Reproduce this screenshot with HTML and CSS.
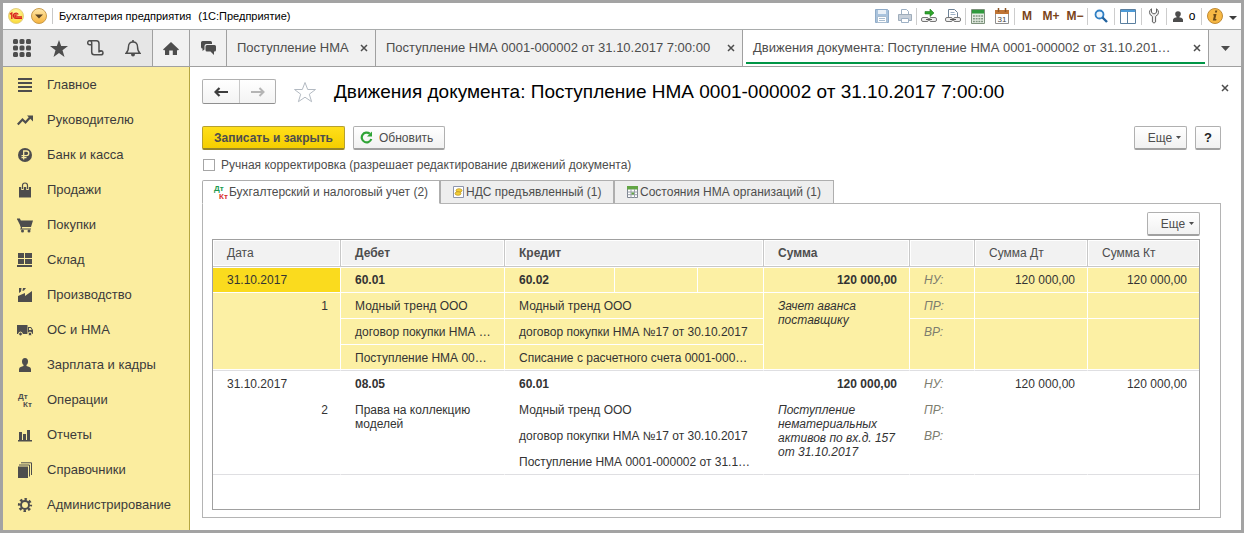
FILE: index.html
```html
<!DOCTYPE html>
<html lang="ru">
<head>
<meta charset="utf-8">
<title>Бухгалтерия предприятия</title>
<link rel="stylesheet" href="styles.css">
</head>
<body>
<div class="window">
  <header class="titlebar">
    <button class="round-btn" aria-label="1С">
      <svg width="18" height="18" viewBox="0 0 18 18"><defs><radialGradient id="gy" cx=".5" cy=".3" r=".7"><stop offset="0" stop-color="#fffbb0"/><stop offset="1" stop-color="#fbd92f"/></radialGradient></defs><circle cx="9" cy="9" r="7.500" fill="url(#gy)" stroke="#e3cf86"/><path d="M2.800 7.200 4.800 6V12M11.300 7.500A2.600 2.600 0 1 0 9.200 11.400H15M10 8.600A1 1 0 1 0 9.300 9.900H15" fill="none" stroke="#d8201c" stroke-width="1.300"/></svg>
    </button>
    <button class="round-btn round-btn-menu" aria-label="Главное меню">
      <svg width="18" height="18" viewBox="0 0 18 18"><defs><linearGradient id="go" x2="0" y2="1"><stop offset="0" stop-color="#ffe9ad"/><stop offset="1" stop-color="#f6b33c"/></linearGradient></defs><circle cx="9" cy="9" r="7.500" fill="url(#go)" stroke="#c89b4c"/><path d="M5 7.500h8L9 11.500z" fill="#5b4526"/></svg>
    </button>
    <span class="title-sep"></span>
    <span class="app-name">Бухгалтерия предприятия</span>
    <span class="app-kind">(1С:Предприятие)</span>
    <div class="tools">
      <button class="tool tool-s" aria-label="Сохранить"><svg width="16" height="16" viewBox="0 0 16 16"><path d="M1.500 1.500h12l1 1v12h-13z" fill="#a9c3dd" stroke="#8fabc8"/><path d="M4 2h8v4H4z" fill="#e9f0f7"/><path d="M3.500 8.500h9v6h-9z" fill="#fff" stroke="#a9bdd0"/><path d="M5 10.500h6M5 12.500h6" stroke="#a9bdd0"/></svg></button>
      <button class="tool tool-s" aria-label="Печать"><svg width="16" height="16" viewBox="0 0 16 16"><path d="M4.500 7V1.500h5l2 2V7" fill="#fff" stroke="#9db0c4"/><path d="M1.500 6.500h13v6h-13z" fill="#c7d0da" stroke="#9fadbb"/><path d="M4.500 10.500h7v4h-7z" fill="#fff" stroke="#9db0c4"/></svg></button>
      <span class="sep"></span>
      <button class="tool" aria-label="Получить ссылку"><svg width="18" height="16" viewBox="0 0 18 16"><path d="M5 3.500h5V1l4 4-4 3.500V6H5z" fill="#2fa52b" stroke="#1c7c20" stroke-width=".6"/><rect x="1.500" y="9.500" width="7" height="4" rx="1.500" fill="#eee" stroke="#777"/><rect x="9.500" y="9.500" width="7" height="4" rx="1.500" fill="#eee" stroke="#777"/><path d="M6 11.500h6" stroke="#555"/></svg></button>
      <button class="tool" aria-label="Перейти по ссылке"><svg width="18" height="16" viewBox="0 0 18 16"><path d="M4.500 9V1.500h6l3 3V9" fill="#fff" stroke="#6f8397"/><path d="M6.500 4.500h4M6.500 6.500h5" stroke="#9db0c4"/><rect x="1.500" y="9.500" width="7" height="4" rx="1.500" fill="#eee" stroke="#777"/><rect x="9.500" y="9.500" width="7" height="4" rx="1.500" fill="#eee" stroke="#777"/><path d="M6 11.500h6" stroke="#555"/></svg></button>
      <span class="sep"></span>
      <button class="tool" aria-label="Калькулятор"><svg width="14" height="15" viewBox="0 0 14 15"><path d="M.5.5h13v14H.5z" fill="#e4ece2" stroke="#7d927c"/><path d="M1 1h12v3.500H1z" fill="#2f9a3c"/><path d="M2 7h10M2 9.700h10M2 12.400h10" stroke="#7f9680" stroke-width="1.500" stroke-dasharray="1.900 .8"/></svg></button>
      <button class="tool" aria-label="Календарь"><svg width="14" height="16" viewBox="0 0 14 16"><path d="M.5 3h13v12.500H.5z" fill="#fff" stroke="#8f8f8f"/><path d="M0 2h14v4H0z" fill="#bf7434"/><path d="M3.500 0v4M10.500 0v4" stroke="#8c5526" stroke-width="1.500"/><text x="7" y="14" class="cal-day">31</text></svg></button>
      <span class="sep"></span>
      <button class="tool tool-m">M</button>
      <button class="tool tool-m">M+</button>
      <button class="tool tool-m">M−</button>
      <span class="sep"></span>
      <button class="tool tool-w" aria-label="Поиск"><svg width="14" height="14" viewBox="0 0 14 14"><circle cx="5.500" cy="5.500" r="4" fill="#eaf4fc" stroke="#2f7fc4" stroke-width="1.800"/><path d="M8.500 8.500 13 13" stroke="#22629e" stroke-width="2.400"/></svg></button>
      <span class="sep"></span>
      <button class="tool tool-w" aria-label="Панели"><svg width="16" height="15" viewBox="0 0 16 15"><path d="M.5.500h15v14H.500z" fill="#fff" stroke="#5a7f9f"/><path d="M1 1h14v2H1z" fill="#4d9bd8"/><path d="M7.500 3v11" stroke="#5a7f9f"/></svg></button>
      <span class="sep"></span>
      <button class="tool" aria-label="Настройка"><svg width="12" height="16" viewBox="0 0 12 16"><path d="M3.500.800A4 4 0 0 0 4 8l.4.500V14q1.600 2.200 3.200 0V8.500L8 8A4 4 0 0 0 8.500.800V4.500L6 6 3.500 4.500z" fill="#eee" stroke="#5f5f5f"/></svg></button>
      <span class="sep"></span>
      <button class="tool tool-user"><svg width="10" height="11" viewBox="0 0 10 11"><circle cx="5" cy="3" r="2.800" fill="#4d4d4d"/><path d="M0 11V9q0-2 3-2.500h4Q10 7 10 9v2zM3.500 4h3v4h-3z" fill="#4d4d4d"/></svg>о</button>
      <span class="sep"></span>
      <button class="tool tool-w" aria-label="Информация"><svg width="18" height="18" viewBox="0 0 18 18"><circle cx="9" cy="9" r="7.500" fill="#f7b844" stroke="#c08a35"/><path d="M9.300 3.500h2l-.4 2h-2zM7.500 7h3l-1.200 5h1.200l-.3 1.500H6.800l1.200-5H7.200z" fill="#6c4a17"/></svg></button>
      <button class="tool tool-arrow" aria-label="Ещё"><svg width="8" height="4" viewBox="0 0 8 4"><path d="M0 0h8L4 4z" fill="#3d3d3d"/></svg></button>
    </div>
  </header>

  <div class="tabbar">
    <div class="quick">
      <button class="quick-btn" aria-label="Меню функций"><svg width="18" height="18" viewBox="0 0 18 18" fill="#4d4d4d"><rect width="5" height="5" rx="1.500"/><rect x="6.500" width="5" height="5" rx="1.500"/><rect x="13" width="5" height="5" rx="1.500"/><rect y="6.500" width="5" height="5" rx="1.500"/><rect x="6.500" y="6.500" width="5" height="5" rx="1.500"/><rect x="13" y="6.500" width="5" height="5" rx="1.500"/><rect y="13" width="5" height="5" rx="1.500"/><rect x="6.500" y="13" width="5" height="5" rx="1.500"/><rect x="13" y="13" width="5" height="5" rx="1.500"/></svg></button>
      <button class="quick-btn" aria-label="Избранное"><svg width="18" height="17" viewBox="0 0 18 17"><path d="M9 0l2.200 6H18l-5.500 4.200L14.500 17 9 12.900 3.500 17l2-6.800L0 6h6.800z" fill="#4d4d4d"/></svg></button>
      <button class="quick-btn" aria-label="История"><svg width="17" height="16" viewBox="0 0 17 16" fill="none" stroke="#4d4d4d" stroke-width="1.500"><path d="M4.500 4.700H2.700A2 2 0 1 1 4.700 2.700V12q0 2.800 2.500 2.800H14A2 2 0 1 0 12 12.500V3.700Q12 .8 9.500.8H2.700M12 11.200h2.500"/></svg></button>
      <button class="quick-btn" aria-label="Оповещения"><svg width="16" height="17" viewBox="0 0 16 17"><path d="M1 13.300Q3.500 11 3.500 6.500 3.500 2 8 2t4.500 4.500Q12.500 11 15 13.300z" fill="none" stroke="#4d4d4d" stroke-width="1.400"/><path d="M7.200 0h1.600v2H7.200zM6 14h4q0 2.500-2 2.500T6 14z" fill="#4d4d4d"/></svg></button>
    </div>
    <button class="square-tab" aria-label="Начальная страница"><svg width="16" height="13" viewBox="0 0 16 13"><path d="M8 0l8 7.500-1.200.9L14 7.700V13H9.800V8.500H6.200V13H2V7.700l-.8.700L0 7.500z" fill="#4d4d4d"/></svg></button>
    <button class="square-tab" aria-label="Обсуждения"><svg width="15" height="14" viewBox="0 0 15 14"><path d="M1.500 0h8Q11 0 11 1.500V3H5.500Q3.500 3 3.500 5v3.500L1.500 10V7.500Q0 7.500 0 6V1.500Q0 0 1.500 0z" fill="#4d4d4d"/><path d="M6 4h7.500Q15 4 15 5.500V9q0 1.500-1.500 1.500H13V14l-3.500-3.500H6Q4.500 10.500 4.500 9V5.500Q4.500 4 6 4z" fill="#4d4d4d"/></svg></button>
    <div class="doc-tab doc-tab-list"><span>Поступление НМА</span><button class="close" aria-label="Закрыть"><svg width="8" height="8" viewBox="0 0 8 8"><path d="M1 1l6 6M7 1L1 7" stroke="#4d4d4d" stroke-width="1.500"/></svg></button></div>
    <div class="doc-tab doc-tab-doc"><span>Поступление НМА 0001-000002 от 31.10.2017 7:00:00</span><button class="close" aria-label="Закрыть"><svg width="8" height="8" viewBox="0 0 8 8"><path d="M1 1l6 6M7 1L1 7" stroke="#4d4d4d" stroke-width="1.500"/></svg></button></div>
    <div class="doc-tab doc-tab-active"><span>Движения документа: Поступление НМА 0001-000002 от 31.10.201…</span><button class="close" aria-label="Закрыть"><svg width="8" height="8" viewBox="0 0 8 8"><path d="M1 1l6 6M7 1L1 7" stroke="#4d4d4d" stroke-width="1.500"/></svg></button></div>
    <button class="tabs-menu" aria-label="Список вкладок"><svg width="9" height="5" viewBox="0 0 9 5"><path d="M0 0h9L4.500 5z" fill="#4d4d4d"/></svg></button>
  </div>

  <div class="body">
    <nav class="sidebar">
      <a href="#"><svg width="16" height="16" viewBox="0 0 16 16"><path d="M1 2h14M1 6h14M1 10h14M1 14h14" stroke="#4d4d4d" stroke-width="2"/></svg>Главное</a>
      <a href="#"><svg width="16" height="16" viewBox="0 0 16 16"><path d="M.8 12.500 5.500 7.500 8.500 10.500 13 5.500" fill="none" stroke="#4d4d4d" stroke-width="2.200"/><path d="M10 3.500h6v6z" fill="#4d4d4d"/></svg>Руководителю</a>
      <a href="#"><svg width="16" height="16" viewBox="0 0 16 16"><circle cx="8" cy="8" r="7" fill="#4d4d4d"/><path d="M6.700 12.500V4h2.800a2.300 2.300 0 0 1 0 4.600H4.500M4.500 10.600h5" fill="none" stroke="#fbed9f" stroke-width="1.300"/></svg>Банк и касса</a>
      <a href="#"><svg width="16" height="16" viewBox="0 0 16 16"><path d="M2 5h12v10.500H2z" fill="#4d4d4d"/><path d="M5.500 8V3.500q0-2.500 2.500-2.500t2.500 2.500V8" fill="none" stroke="#fbed9f" stroke-width="2.600"/><path d="M5.500 7V3.500Q5.500 1 8 1t2.500 2.500V7" fill="none" stroke="#4d4d4d" stroke-width="1.200"/></svg>Продажи</a>
      <a href="#"><svg width="16" height="16" viewBox="0 0 16 16"><path d="M0 2h3l.5 1.500H16L14 10H4z" fill="#4d4d4d"/><path d="M0 2h2.500l2 8.500L4 12h10" fill="none" stroke="#4d4d4d" stroke-width="1.200"/><circle cx="5.500" cy="14" r="1.500" fill="#4d4d4d"/><circle cx="12" cy="14" r="1.500" fill="#4d4d4d"/></svg>Покупки</a>
      <a href="#"><svg width="16" height="16" viewBox="0 0 16 16"><path d="M1 1h6v5H1zM8 1h7v5H8zM1 7h6v5H1zM8 7h7v5H8zM0 13h15v2H0z" fill="#4d4d4d"/></svg>Склад</a>
      <a href="#"><svg width="16" height="16" viewBox="0 0 16 16"><path d="M1 15V9l7-3v3l7-5v11zM2 1h2.500L4 4.500 2 6zM6 1h3L7 3.500 5.500 4z" fill="#4d4d4d"/></svg>Производство</a>
      <a href="#"><svg width="16" height="16" viewBox="0 0 16 16"><path d="M0 3h10.500v9H0zM11 5h3l2 3v4h-5z" fill="#4d4d4d"/><path d="M12 6h1.700l1 2H12z" fill="#fbed9f"/><circle cx="3.500" cy="12" r="1.900" fill="#4d4d4d" stroke="#fbed9f"/><circle cx="13" cy="12" r="1.900" fill="#4d4d4d" stroke="#fbed9f"/></svg>ОС и НМА</a>
      <a href="#"><svg width="16" height="16" viewBox="0 0 16 16"><ellipse cx="8" cy="4.500" rx="3" ry="3.500" fill="#4d4d4d"/><path d="M2 15v-2.500Q2 10 5 9.500l1.500-.5V7h3v2l1.500.5q3 .5 3 3V15z" fill="#4d4d4d"/></svg>Зарплата и кадры</a>
      <a href="#"><svg width="16" height="16" viewBox="0 0 16 16" class="dtkt"><text x="1" y="7">Дт</text><text x="6" y="15">Кт</text></svg>Операции</a>
      <a href="#"><svg width="16" height="16" viewBox="0 0 16 16"><path d="M2 5h3v8H2zM6 7h3v6H6zM10 3h3v10h-3zM1 13h14v1.500H1z" fill="#4d4d4d"/></svg>Отчеты</a>
      <a href="#"><svg width="16" height="16" viewBox="0 0 16 16"><path d="M1 4.500h10V16H1z" fill="#4d4d4d"/><path d="M2 3h10.500v11.500M4 .8h10.500V13" fill="none" stroke="#4d4d4d"/></svg>Справочники</a>
      <a href="#"><svg width="16" height="16" viewBox="0 0 16 16"><circle cx="8" cy="8" r="5.800" fill="none" stroke="#4d4d4d" stroke-width="2.600" stroke-dasharray="2.400 2.155" stroke-dashoffset="1.200"/><circle cx="8" cy="8" r="4" fill="none" stroke="#4d4d4d" stroke-width="2"/></svg>Администрирование</a>
    </nav>

    <main class="content">
      <div class="head">
        <div class="history">
          <button aria-label="Назад"><svg width="14" height="10" viewBox="0 0 14 10"><path d="M1.500 5H14M5.500 1 1.500 5l4 4" fill="none" stroke="#3d3d3d" stroke-width="2.200"/></svg></button>
          <button aria-label="Вперед"><svg width="14" height="10" viewBox="0 0 14 10"><path d="M0 5h12.500M8.500 1l4 4-4 4" fill="none" stroke="#b5b5b5" stroke-width="2"/></svg></button>
        </div>
        <button class="star" aria-label="В избранное"><svg width="24" height="22" viewBox="0 0 24 22"><path d="M12 1.500l2.700 7H22.500l-6.200 4.700 2.300 7.500L12 16.200l-6.600 4.500 2.300-7.500L1.500 8.500h7.800z" fill="#fff" stroke="#b3bac2"/></svg></button>
        <h1>Движения документа: Поступление НМА 0001-000002 от 31.10.2017 7:00:00</h1>
        <button class="close" aria-label="Закрыть форму"><svg width="8" height="8" viewBox="0 0 8 8"><path d="M1 1l6 6M7 1L1 7" stroke="#4d4d4d" stroke-width="1.500"/></svg></button>
      </div>

      <div class="commands">
        <button class="btn btn-main">Записать и закрыть</button>
        <button class="btn btn-refresh"><svg width="13" height="13" viewBox="0 0 13 13"><path d="M9.800 2.700A4.900 4.900 0 1 0 11.300 8" fill="none" stroke="#2fa336" stroke-width="2.200"/><path d="M12 .5v5H7z" fill="#2fa336"/></svg>Обновить</button>
        <button class="btn btn-more">Еще<svg width="5" height="3" viewBox="0 0 5 3"><path d="M0 0h5L2.500 3z" fill="#4d4d4d"/></svg></button>
        <button class="btn btn-help">?</button>
      </div>

      <label class="manual"><input type="checkbox">Ручная корректировка (разрешает редактирование движений документа)</label>

      <div class="pages" role="tablist">
        <button class="page page-active" role="tab" aria-selected="true"><svg width="15" height="14" viewBox="0 0 15 14" class="dtkt"><text x="0" y="6" class="dt">Дт</text><text x="5" y="14" class="kt">Кт</text></svg>Бухгалтерский и налоговый учет (2)</button>
        <button class="page page-vat" role="tab"><svg width="11" height="12" viewBox="0 0 11 12"><path d="M.5.500h10v11H.500z" fill="#fff" stroke="#8d95ad"/><ellipse cx="6" cy="4.500" rx="3" ry="1.800" fill="#f3cf3a" stroke="#b8901c" stroke-width=".7"/><ellipse cx="5" cy="7.500" rx="3" ry="1.800" fill="#f3cf3a" stroke="#b8901c" stroke-width=".7"/></svg>НДС предъявленный (1)</button>
        <button class="page page-state" role="tab"><svg width="11" height="12" viewBox="0 0 11 12"><path d="M.5.500h10v11H.500z" fill="#fff" stroke="#7d8591"/><path d="M0 0h11v3.500H0z" fill="#62a544"/><path d="M.5 6h10M.5 8.700h10M4 3v9M7.500 3v9" stroke="#9aa1ab"/><path d="M4.500 6.500h2.500v2H4.500z" fill="#62a544"/></svg>Состояния НМА организаций (1)</button>
      </div>

      <section class="panel">
        <button class="btn btn-more">Еще<svg width="5" height="3" viewBox="0 0 5 3"><path d="M0 0h5L2.500 3z" fill="#4d4d4d"/></svg></button>
        <div class="grid">
          <table>
            <colgroup><col class="c-date"><col class="c-debit"><col class="c-cr1"><col class="c-cr2"><col class="c-cr3"><col class="c-sum"><col class="c-kind"><col class="c-dt"><col class="c-kt"></colgroup>
            <thead>
              <tr><th>Дата</th><th class="b">Дебет</th><th class="b" colspan="3">Кредит</th><th class="b">Сумма</th><th></th><th>Сумма Дт</th><th>Сумма Кт</th></tr>
            </thead>
            <tbody class="current">
              <tr><td class="focus">31.10.2017</td><td class="b">60.01</td><td class="b">60.02</td><td></td><td></td><td class="b num">120 000,00</td><td class="kind">НУ:</td><td class="num">120 000,00</td><td class="num">120 000,00</td></tr>
              <tr><td class="num last" rowspan="3">1</td><td>Модный тренд ООО</td><td colspan="3">Модный тренд ООО</td><td class="note last" rowspan="3">Зачет аванса поставщику</td><td class="kind">ПР:</td><td></td><td></td></tr>
              <tr><td>договор покупки НМА …</td><td colspan="3">договор покупки НМА №17 от 30.10.2017</td><td class="kind last" rowspan="2">ВР:</td><td class="last" rowspan="2"></td><td class="last" rowspan="2"></td></tr>
              <tr><td class="last">Поступление НМА 00…</td><td class="last" colspan="3">Списание с расчетного счета 0001-000…</td></tr>
            </tbody>
            <tbody>
              <tr><td>31.10.2017</td><td class="b">08.05</td><td class="b">60.01</td><td></td><td></td><td class="b num">120 000,00</td><td class="kind">НУ:</td><td class="num">120 000,00</td><td class="num">120 000,00</td></tr>
              <tr><td class="num last" rowspan="3">2</td><td class="wrap last" rowspan="3">Права на коллекцию моделей</td><td colspan="3">Модный тренд ООО</td><td class="note last" rowspan="3">Поступление нематериальных активов по вх.д. 157 от 31.10.2017</td><td class="kind">ПР:</td><td></td><td></td></tr>
              <tr><td colspan="3">договор покупки НМА №17 от 30.10.2017</td><td class="kind last" rowspan="2">ВР:</td><td class="last" rowspan="2"></td><td class="last" rowspan="2"></td></tr>
              <tr><td class="last" colspan="3">Поступление НМА 0001-000002 от 31.1…</td></tr>
            </tbody>
          </table>
        </div>
      </section>
    </main>
  </div>
</div>
</body>
</html>
```
FILE: styles.css
```css
* { box-sizing: border-box; }
body { margin: 0; font: 12px/14px "Liberation Sans", Arial, sans-serif; color: #4d4d4d; background: #fff; }
button { font: inherit; color: inherit; padding: 0; border: 0; background: none; white-space: nowrap; }
svg { display: block; flex: none; }

.window { display: flex; flex-direction: column; min-height: 100vh; border: 3px solid #a3a3a3; }

.titlebar { display: flex; align-items: center; height: 27px; padding: 0 3px 0 4px; border-bottom: 1px solid #a9acac; color: #000; font-size: 11px; white-space: nowrap; }
.round-btn-menu { margin-left: 5px; }
.title-sep { width: 1px; height: 16px; margin: 0 6px 0 4px; background: #c8c8c8; }
.app-kind { margin-left: 7px; }
.tools { display: flex; align-items: center; margin-left: auto; }
.tool { display: flex; align-items: center; justify-content: center; width: 24px; height: 24px; }
.tool-s { width: 23px; }
.tool-w { width: 26px; }
.tool-m { color: #7a4419; font-weight: bold; font-size: 12px; }
.tool-user { width: 34px; gap: 6px; font-size: 12px; }
.tool-arrow { width: 10px; padding-top: 4px; }
.sep { width: 1px; height: 17px; background: #cdcdcd; }
.cal-day { font: 8px "Liberation Sans", Arial, sans-serif; fill: #444; text-anchor: middle; }

.tabbar { display: flex; height: 37px; border-bottom: 1px solid #a0a0a0; background: #f1f1f1; font-size: 13px; }
.quick { display: flex; align-items: center; width: 150px; background: #e6e6e6; border-right: 1px solid #a0a0a0; }
.quick-btn { display: flex; align-items: center; justify-content: center; width: 37px; height: 36px; }
.square-tab { display: flex; align-items: center; justify-content: center; width: 37px; border-right: 1px solid #a0a0a0; }
.doc-tab { display: flex; align-items: center; justify-content: space-between; padding: 0 7px 0 10px; border-right: 1px solid #a0a0a0; white-space: nowrap; }
.doc-tab-list { width: 149px; }
.doc-tab-doc { width: 367px; }
.doc-tab-active { position: relative; flex: 1; background: #fff; }
.doc-tab-active::after { content: ""; position: absolute; left: 3px; right: 3px; bottom: 2px; height: 2px; background: #009646; }
.close { display: flex; }
.tabs-menu { display: flex; align-items: center; justify-content: center; width: 32px; }

.body { display: flex; flex: 1; }
.sidebar { width: 187px; background: #fbed9f; border-right: 1px solid #b5a642; font-size: 13px; }
.sidebar a { display: flex; align-items: center; gap: 14px; height: 35px; padding-left: 14px; color: #3b3b3b; text-decoration: none; }
.dtkt { overflow: visible; font: bold 8px "Liberation Sans", Arial, sans-serif; fill: #4d4d4d; }
.dt { fill: #1e9a50; }
.kt { fill: #d8302c; }

.content { display: flex; flex-direction: column; flex: 1; min-width: 0; padding: 12px 20px 12px 12px; }
.head { display: flex; align-items: center; margin-right: -8px; }
.history { display: flex; height: 25px; border: 1px solid #b0b0b0; border-bottom-color: #8f8f8f; border-radius: 2px; background: linear-gradient(#fff, #f3f3f3); }
.history button { display: flex; align-items: center; justify-content: center; width: 36px; }
.history button + button { border-left: 1px solid #c8c8c8; }
.star { margin-left: 17px; }
h1 { margin: 0 auto 0 17px; font-size: 19px; line-height: 24px; font-weight: normal; color: #000; white-space: nowrap; }
.head .close { padding-bottom: 8px; }

.commands { display: flex; gap: 8px; margin-top: 22px; }
.btn { display: flex; align-items: center; justify-content: center; height: 24px; border: 1px solid #b0b0b0; border-bottom: 2px solid #a0a0a0; border-radius: 2px; background: linear-gradient(#fff, #f1f1f1); }
.btn-main { width: 143px; font-weight: bold; border-color: #b5a030; border-bottom-color: #94842c; background: linear-gradient(#ffdf1a, #f5ce00); }
.btn-refresh { width: 92px; justify-content: flex-start; gap: 6px; padding-left: 6px; }
.btn-more { width: 53px; gap: 4px; padding-left: 8px; }
.commands .btn-more { margin-left: auto; }
.btn-help { width: 26px; font-weight: bold; font-size: 13px; color: #222; }

.manual { display: flex; align-items: center; gap: 6px; height: 16px; margin: 7px 0 7px 1px; }
.manual input { appearance: none; width: 12px; height: 12px; margin: 0; border: 1px solid #a6a6a6; background: #fff; }

.pages { display: flex; }
.page { display: flex; align-items: center; height: 24px; padding: 0 11px; border: 1px solid #aeaeae; background: #eee; }
.page + .page { border-left-width: 0; box-shadow: inset 1px 0 #aeaeae; }
.page-active { position: relative; width: 238px; background: #fff; border-bottom-color: #fff; border-top-left-radius: 2px; }
.page-vat { width: 174px; gap: 2px; padding-left: 13px; }
.page-state { width: 220px; gap: 2px; padding-left: 13px; }

.panel { display: flex; flex-direction: column; flex: 1; margin-top: -1px; padding: 8px 20px 7px 9px; border: 1px solid #b4b4b4; }
.panel .btn-more { align-self: flex-end; }
.grid { flex: 1; margin-top: 3px; border: 1px solid #a0a0a0; }
table { width: 100%; table-layout: fixed; border-collapse: separate; border-spacing: 0; }
.c-date { width: 128px; }
.c-debit { width: 164px; }
.c-cr1 { width: 110px; }
.c-cr2 { width: 83px; }
.c-cr3 { width: 66px; }
.c-sum { width: 146px; }
.c-kind { width: 65px; }
.c-dt { width: 113px; }
.c-kt { width: 111px; }
th { height: 27px; padding: 0 14px; text-align: left; font-weight: normal; background: #f2f2f2; border-right: 1px solid #c8c8c8; border-bottom: 1px solid #c8c8c8; box-shadow: inset 0 0 0 1px #fff; }
.b { font-weight: bold; }
td { height: 26px; padding: 6px 12px 5px 14px; vertical-align: top; color: #333; white-space: nowrap; border-right: 1px solid #fff; border-bottom: 1px solid #fff; }
tr:first-child td { border-top: 1px solid #fff; padding-top: 5px; }
th:last-child, tr:not(:last-child) > td:last-child { border-right: 0; }
td.last { border-bottom-color: #dfdfe2; box-shadow: inset 0 -1px #fff; }
.num { text-align: right; }
.kind { color: #7d7d6e; font-style: italic; }
.note, .wrap { white-space: normal; }
.note { font-style: italic; padding-right: 4px; }
.current td { background: #fcf0a4; }
.current .focus { background: #fadb1e; }
```
